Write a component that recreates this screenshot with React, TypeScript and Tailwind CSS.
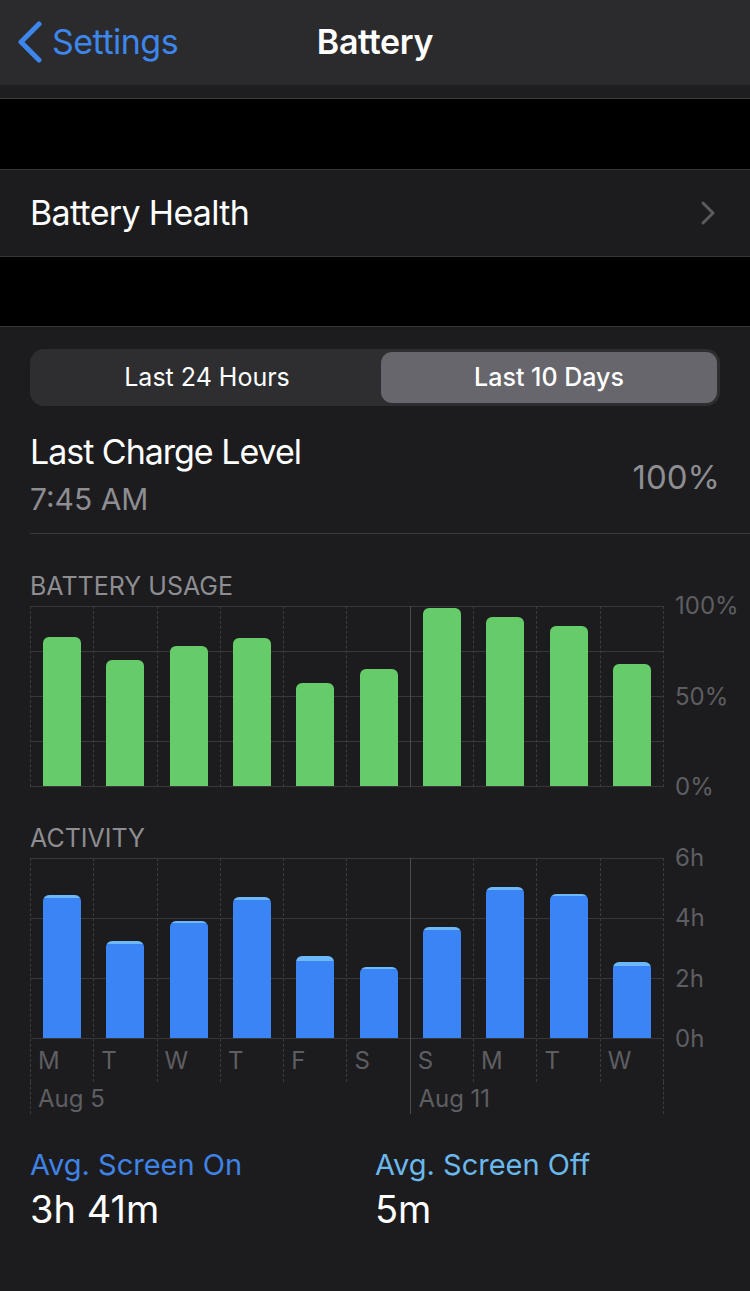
import React from 'react'

const usage = [83, 70, 78, 82, 57, 65, 99, 94, 89, 68]

// activity bar heights in px (180px = 6h), cap = screen off part
const activity = [
  { h: 143, cap: 3 },
  { h: 97, cap: 3 },
  { h: 117, cap: 2 },
  { h: 141, cap: 3 },
  { h: 82, cap: 5 },
  { h: 71, cap: 2 },
  { h: 111, cap: 3 },
  { h: 151, cap: 3 },
  { h: 144, cap: 2 },
  { h: 76, cap: 4 },
]

const days = ['M', 'T', 'W', 'T', 'F', 'S', 'S', 'M', 'T', 'W']

function colLine(i: number) {
  if (i === 6) return 'border-l border-solid border-[#4c4c50]'
  return 'border-l border-dashed border-[#3c3c3f]'
}

function BatteryChart() {
  return (
    <div className="flex mt-[5px]">
      <div className="ml-[30px] w-[634px] flex border-r border-dashed border-[#3c3c3f]">
        {usage.map((v, i) => (
          <div
            key={i}
            className={`flex-1 h-[181px] flex items-end justify-center bg-[repeating-linear-gradient(to_bottom,#38383b_0px,#38383b_1px,transparent_1px,transparent_45px)] ${colLine(i)}`}
          >
            <div
              className="w-[38px] mb-px rounded-t-[6px] bg-[#65cc69]"
              style={{ height: Math.round(v * 1.8) }}
            />
          </div>
        ))}
      </div>
      <div className="flex flex-col justify-between h-[205px] -my-[12px] pl-[11px] text-[24px] leading-[24px] text-[#5e5e62]">
        <span>100%</span>
        <span>50%</span>
        <span>0%</span>
      </div>
    </div>
  )
}

function ActivityChart() {
  return (
    <div className="mt-[5px]">
      <div className="flex">
        <div className="ml-[30px] w-[634px] flex border-r border-dashed border-[#3c3c3f]">
          {activity.map((b, i) => (
            <div key={i} className={`flex-1 flex flex-col ${colLine(i)}`}>
              <div className="h-[181px] flex items-end justify-center bg-[repeating-linear-gradient(to_bottom,#38383b_0px,#38383b_1px,transparent_1px,transparent_60px)]">
                <div className="w-[38px] mb-px rounded-t-[6px] overflow-hidden flex flex-col" style={{ height: b.h }}>
                  <div className="bg-[#6cb8f8]" style={{ height: b.cap }} />
                  <div className="flex-1 bg-[#3b84f6]" />
                </div>
              </div>
              <div className="h-[43px] pl-[7px] pt-[10px] text-[24px] leading-[24px] text-[#5e5e62]">{days[i]}</div>
            </div>
          ))}
        </div>
        <div className="flex flex-col justify-between h-[205px] -mt-[12px] pl-[11px] text-[24px] leading-[24px] text-[#5e5e62]">
          <span>6h</span>
          <span>4h</span>
          <span>2h</span>
          <span>0h</span>
        </div>
      </div>
      <div className="ml-[30px] w-[634px] flex h-[32px] border-r border-dashed border-[#3c3c3f] text-[24px] leading-[24px] text-[#5e5e62]">
        <div className="w-[380.4px] border-l border-dashed border-[#3c3c3f] pl-[7px] pt-[5px]">Aug 5</div>
        <div className="flex-1 border-l border-solid border-[#4c4c50] pl-[7px] pt-[5px]">Aug 11</div>
      </div>
    </div>
  )
}

export default function App() {
  return (
    <div className="w-[750px] min-h-[1291px] bg-[#1c1c1e] font-['Inter',sans-serif] text-white">
      {/* nav bar */}
      <div className="h-[85px] bg-[#2b2b2d] flex items-center">
        <div className="flex-1 flex items-center -mt-[2px]">
          <svg width="26" height="42" viewBox="0 0 26 42" className="ml-[17px]">
            <path d="M22 3 L4 21 L22 39" fill="none" stroke="#3d86ec" strokeWidth="5" strokeLinecap="round" strokeLinejoin="round" />
          </svg>
          <span className="ml-[9px] text-[34px] leading-[40px] text-[#3d86ec] tracking-[-0.015em]">Settings</span>
        </div>
        <span className="-mt-[2px] text-[34px] leading-[40px] font-semibold tracking-[-0.01em]">Battery</span>
        <div className="flex-1" />
      </div>
      <div className="h-[14px] bg-[#1e1e20] border-b border-[#3d3d40]" />
      <div className="h-[70px] bg-black" />
      <div className="h-[88px] bg-[#1c1c1e] border-y border-[#38383a] flex items-center justify-between pl-[30px] pr-[34px]">
        <span className="text-[34px] leading-[40px] tracking-[-0.02em]">Battery Health</span>
        <svg width="16" height="26" viewBox="0 0 16 26">
          <path d="M3 3 L13 13 L3 23" fill="none" stroke="#5b5b5f" strokeWidth="3" strokeLinecap="round" strokeLinejoin="round" />
        </svg>
      </div>
      <div className="h-[70px] bg-black border-b border-[#38383a]" />

      {/* segmented control */}
      <div className="mx-[30px] mt-[22px] h-[57px] rounded-[14px] bg-[#2e2e31] p-[3px] grid grid-cols-[1fr_336px]">
        <div className="flex items-center justify-center text-[25px] font-normal">Last 24 Hours</div>
        <div className="flex items-center justify-center rounded-[11px] bg-[#67666c] text-[25px] font-medium">Last 10 Days</div>
      </div>

      {/* last charge */}
      <div className="mt-[26px] ml-[30px] pr-[30px] pb-[16px] border-b border-[#3a3a3c] flex items-center justify-between">
        <div>
          <div className="text-[34px] leading-[40px] tracking-[-0.03em]">Last Charge Level</div>
          <div className="mt-[9px] text-[30px] leading-[36px] text-[#8d8d92]">7:45 AM</div>
        </div>
        <div className="text-[33px] leading-[40px] text-[#8d8d92] mt-[4px]">100%</div>
      </div>

      <div className="mt-[37px] pl-[30px] text-[25px] leading-[30px] text-[#8d8d92]">BATTERY USAGE</div>
      <BatteryChart />

      <div className="mt-[36px] pl-[30px] text-[25px] leading-[30px] text-[#8d8d92]">ACTIVITY</div>
      <ActivityChart />

      {/* averages */}
      <div className="mt-[33px] pl-[30px] grid grid-cols-[345px_1fr]">
        <div>
          <div className="text-[29px] leading-[36px] text-[#3f83e6]">Avg. Screen On</div>
          <div className="mt-[4px] text-[38px] leading-[44px]">3h 41m</div>
        </div>
        <div>
          <div className="text-[29px] leading-[36px] text-[#6bb8ec]">Avg. Screen Off</div>
          <div className="mt-[4px] text-[38px] leading-[44px]">5m</div>
        </div>
      </div>
    </div>
  )
}
